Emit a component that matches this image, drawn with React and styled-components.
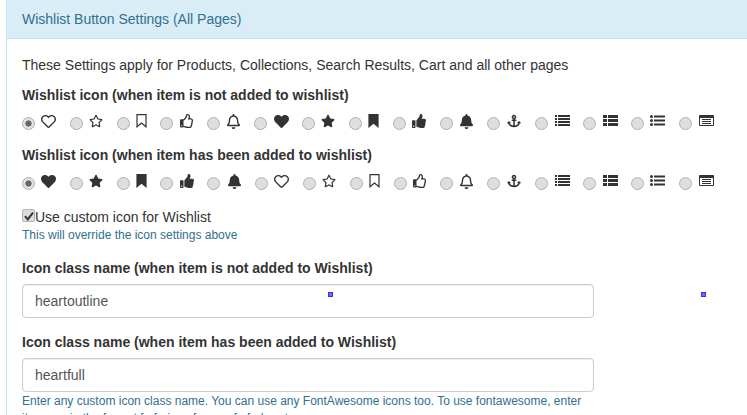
import React from "react"
import styled, { createGlobalStyle } from "styled-components"
import {
	FaRegHeart,
	FaRegStar,
	FaRegThumbsUp,
	FaRegBell,
	FaHeart,
	FaStar,
	FaThumbsUp,
	FaBell,
	FaAnchor,
} from "react-icons/fa"

const GlobalStyle = createGlobalStyle`
	html, body {
		margin: 0;
		height: 415px;
		overflow: hidden;
		background: #fff;
		font-family: "Liberation Sans", Arial, sans-serif;
		font-size: 14px;
		color: #333;
	}
`
const Panel = styled.div`
	position: relative;
	margin-left: 6px;
	width: 760px;
	height: 415px;
	border-left: 1px solid #bce8f1;
	overflow: hidden;
`
const PanelHeading = styled.div`
	height: 39px;
	box-sizing: border-box;
	padding: 11px 15px 0;
	background: #d9edf7;
	border-bottom: 1px solid #bce8f1;
	color: #31708f;
	font-size: 14px;
	line-height: 16px;
`
const PanelBody = styled.div`
	width: 572px;
	padding: 16px 0 0 15px;
`
const Intro = styled.p`
	margin: 0;
	line-height: 20px;
	white-space: nowrap;
`
const Label = styled.div`
	margin-top: ${({ $top }) => $top}px;
	font-weight: 700;
	line-height: 20px;
	white-space: nowrap;
`
const IconRow = styled.div`
	display: flex;
	align-items: flex-start;
	height: 20px;
	margin-top: 8px;
	width: 720px;
`
const Option = styled.label`
	display: flex;
	align-items: flex-start;
	margin-right: 13px;
`
const Radio = styled.input.attrs({ type: "radio", readOnly: true })`
	appearance: none;
	box-sizing: border-box;
	width: 13px;
	height: 13px;
	margin: 4px 6px 0 0;
	border: 1px solid #b0b0b0;
	border-radius: 50%;
	background: #dedede;
	&:checked {
		background: radial-gradient(circle, #666 0, #666 2.8px, #e2e2e2 3.4px);
	}
`
const IconBox = styled.span`
	display: flex;
	justify-content: center;
	width: ${({ $w }) => $w}px;
	height: 16px;
	margin-top: 1px;
	color: #333;
`
const CheckLine = styled.label`
	display: flex;
	align-items: center;
	margin-top: 14px;
	height: 20px;
`
const Check = styled.span`
	display: flex;
	align-items: center;
	justify-content: center;
	box-sizing: border-box;
	width: 13px;
	height: 13px;
	margin-bottom: 3px;
	border: 1px solid #b5b5b5;
	border-radius: 2px;
	background: #dcdcdc;
`
const HelpText = styled.div`
	margin-top: ${({ $top }) => $top || 0}px;
	color: #31708f;
	font-size: 12px;
	line-height: 17px;
	white-space: ${({ $wrap }) => ($wrap ? "normal" : "nowrap")};
`
const TextInput = styled.input.attrs({ type: "text", readOnly: true })`
	display: block;
	box-sizing: border-box;
	width: 100%;
	height: 34px;
	margin-top: 6px;
	padding: 0 12px;
	border: 1px solid #ccc;
	border-radius: 4px;
	background: #fff;
	color: #555;
	font: 14px "Liberation Sans", Arial, sans-serif;
	box-shadow: inset 0 1px 1px rgba(0, 0, 0, 0.075);
	outline: none;
`
const Handle = styled.span`
	position: absolute;
	top: 292px;
	left: ${({ $left }) => $left}px;
	box-sizing: border-box;
	width: 5px;
	height: 5px;
	background: #6a6aff;
	border: 1px solid #3535e0;
`

const BookmarkOutline = () => (
	<svg width="11" height="14" viewBox="0 0 11 14">
		<path d="M1 .7H10V12.8L5.5 9 1 12.8Z" fill="none" stroke="#333" strokeWidth="1.2" />
	</svg>
)
const BookmarkSolid = () => (
	<svg width="11" height="14" viewBox="0 0 11 14">
		<path d="M.4 0H10.6V14L5.5 9.8 .4 14Z" fill="#333" />
	</svg>
)
const ListIcon = () => (
	<svg width="15" height="14" viewBox="0 0 15 14" fill="#333">
		{[1, 4, 7, 10].map(y => (
			<React.Fragment key={y}>
				<rect x="0" y={y} width="2" height="2" />
				<rect x="3" y={y} width="12" height="2" />
			</React.Fragment>
		))}
	</svg>
)
const ThListIcon = () => (
	<svg width="15" height="14" viewBox="0 0 15 14" fill="#333">
		{[1, 5, 9].map(y => (
			<React.Fragment key={y}>
				<rect x="0" y={y} width="4" height="3" />
				<rect x="5" y={y} width="10" height="3" />
			</React.Fragment>
		))}
	</svg>
)
const ListUlIcon = () => (
	<svg width="15" height="14" viewBox="0 0 15 14" fill="#333">
		{[2, 6, 10].map(y => (
			<React.Fragment key={y}>
				<circle cx="1.5" cy={y + 0.5} r="1.5" />
				<rect x="4" y={y - 0.5} width="11" height="2" />
			</React.Fragment>
		))}
	</svg>
)
const ListAltIcon = () => (
	<svg width="15" height="14" viewBox="0 0 15 14">
		<rect x="0" y="1" width="15" height="11" rx="1" fill="#333" />
		<rect x="1" y="4" width="13" height="7" fill="#fff" />
		{[5, 7, 9].map(y => (
			<rect key={y} x="3" y={y} width="9" height="1" fill="#333" />
		))}
	</svg>
)

const glyph = (Icon, w, size = 14) => ({ node: <Icon size={size} />, w })

const outline = [
	glyph(FaRegHeart, 15.5, 15),
	glyph(FaRegStar, 15.2),
	glyph(BookmarkOutline, 11.8),
	glyph(FaRegThumbsUp, 14.6),
	glyph(FaRegBell, 15.2, 15),
]
const solid = [
	glyph(FaHeart, 15.5, 15),
	glyph(FaStar, 15.2),
	glyph(BookmarkSolid, 11.8),
	glyph(FaThumbsUp, 15),
	glyph(FaBell, 15.6, 15),
]
const shared = [
	glyph(FaAnchor, 15.8),
	glyph(ListIcon, 16),
	glyph(ThListIcon, 16),
	glyph(ListUlIcon, 15.5),
	glyph(ListAltIcon, 17),
]

const IconOptions = ({ name, icons }) => (
	<IconRow>
		{icons.map((icon, i) => (
			<Option key={i}>
				<Radio name={name} defaultChecked={i === 0} />
				<IconBox $w={icon.w}>{icon.node}</IconBox>
			</Option>
		))}
	</IconRow>
)

const App = () => (
	<>
		<GlobalStyle />
		<Panel>
			<PanelHeading>Wishlist Button Settings (All Pages)</PanelHeading>
			<PanelBody>
				<Intro>These Settings apply for Products, Collections, Search Results, Cart and all other pages</Intro>
				<Label $top={10}>Wishlist icon (when item is not added to wishlist)</Label>
				<IconOptions name="icon-off" icons={[...outline, ...solid, ...shared]} />
				<Label $top={12}>Wishlist icon (when item has been added to wishlist)</Label>
				<IconOptions name="icon-on" icons={[...solid, ...outline, ...shared]} />
				<CheckLine>
					<Check>
						<svg width="10" height="10" viewBox="0 0 10 10">
							<path d="M1 5.2 L3.8 8.4 L9 1.6" fill="none" stroke="#333" strokeWidth="2" />
						</svg>
					</Check>
					Use custom icon for Wishlist
				</CheckLine>
				<HelpText>This will override the icon settings above</HelpText>
				<Label $top={14}>Icon class name (when item is not added to Wishlist)</Label>
				<TextInput defaultValue="heartoutline" />
				<Label $top={14}>Icon class name (when item has been added to Wishlist)</Label>
				<TextInput defaultValue="heartfull" />
				<HelpText $wrap $top={1}>
					Enter any custom icon class name. You can use any FontAwesome icons too. To use fontawesome, enter
					items as in the format fa fa-icon for e.g. fa fa-heart
				</HelpText>
			</PanelBody>
			<Handle $left={321} />
			<Handle $left={694} />
		</Panel>
	</>
)

export default App
